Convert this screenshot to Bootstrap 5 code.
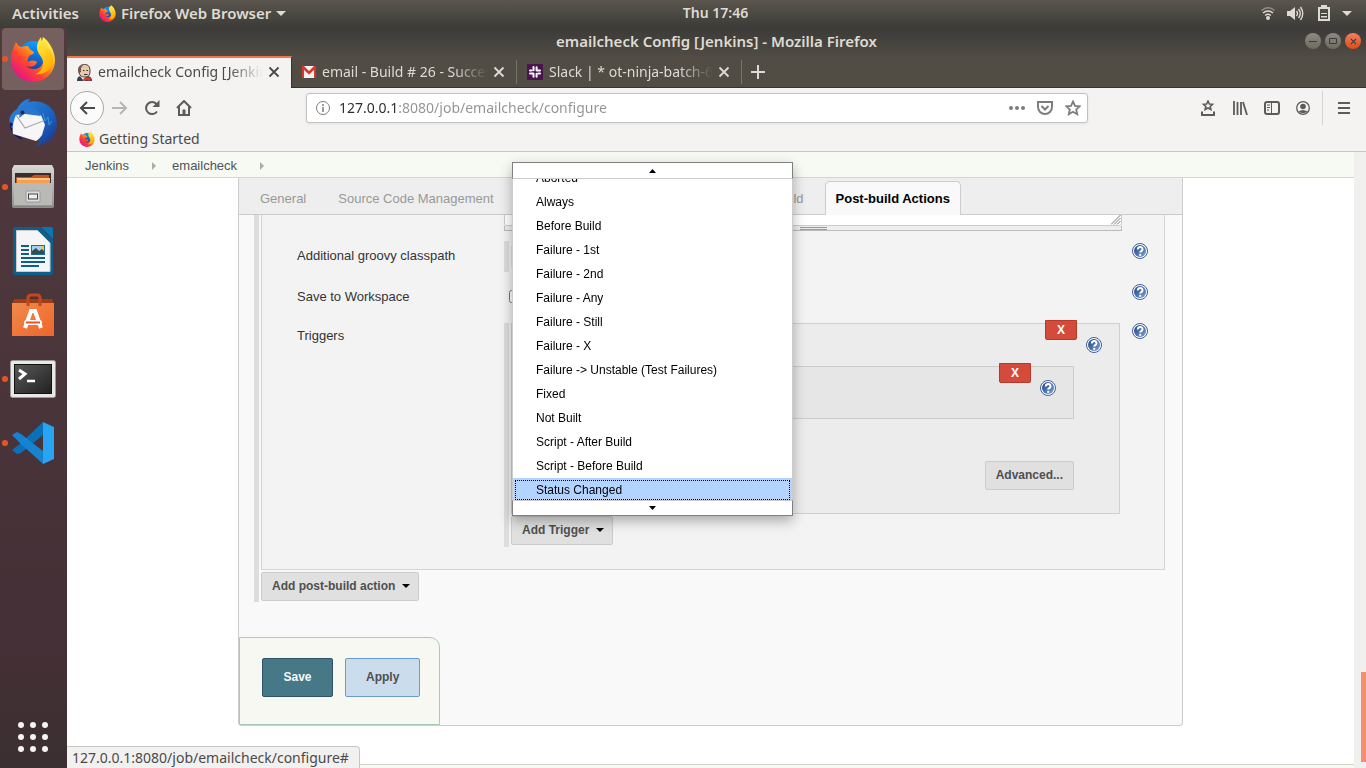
<!DOCTYPE html>
<html lang="en">
<head>
<meta charset="utf-8">
<meta name="viewport" content="width=device-width, initial-scale=1">
<title>emailcheck Config [Jenkins]</title>
<link href="https://cdn.jsdelivr.net/npm/bootstrap@5.3.0/dist/css/bootstrap.min.css" rel="stylesheet">
<style>
  :root { --ui: "Noto Sans", "Open Sans", sans-serif; --web: "Liberation Sans", Arial, sans-serif; }
  body { font-family: var(--ui); font-size: 14px; line-height: 20px; color: #4a4a4a; background: #fff; }
  button { font: inherit; color: inherit; }
  .bare { border: 0; background: none; padding: 0; display: flex; align-items: center; justify-content: center; }
  svg { flex: none; display: block; }

  /* desktop top bar */
  .topbar { height: 28px; background: linear-gradient(#5a564e, #3c3b37); color: #dfdbd2; font-weight: 600; font-size: 15px; padding: 0 14px 2px 12px; }
  .topbar .side { flex: 1 1 0; }
  .topbar .clock { padding-left: 67px; font-size: 14px; }
  .topbar .appmenu { gap: 5px; margin-left: 20px; }

  /* dock */
  .dock { width: 67px; background: linear-gradient(#513a3e, #4a353b 45%, #432f35 85%, #3b2f31); }
  .dock .launcher { width: 62px; height: 62px; margin: 0 0 2px 2px; border-radius: 4px; position: relative; }
  .dock .launcher.current { background: #75605f; }
  .dock .running::before { content: ""; position: absolute; left: 0; top: 28px; width: 6px; height: 6px; border-radius: 50%; background: #e95420; }

  /* browser window */
  .titlebar { height: 28px; background: linear-gradient(#3c3b37, #4f4b44); color: #dfdbd2; font-weight: 600; font-size: 15px; padding-bottom: 2px; }
  .titlebar .wm { right: 5px; top: 5px; gap: 4px; }
  .wm button { width: 16px; height: 16px; border-radius: 50%; background: linear-gradient(#8d8a82, #6d6a63); color: #3c3b37; }
  .wm .wm-close { background: linear-gradient(#f4805b, #df4a1c); }
  .tabstrip { height: 32px; background: #514d45; border-bottom: 1px solid #35332f; color: #dedbd5; }
  .btab { width: 225px; padding: 0 12px 0 10px; position: relative; min-width: 0; }
  .btab + .btab::after { content: ""; position: absolute; right: 0; top: 4px; bottom: 3px; width: 1px; background: #77736b; }
  .btab.on { background: #f4f3f2; color: #4a4a4a; border-top: 2px solid #f07746; border-right: 1px solid #35332f; height: 32px; padding: 0 11px 2px 10px; }
  .btab .ttl { flex: 1; overflow: hidden; white-space: nowrap; margin: 0 5px 0 6px; -webkit-mask-image: linear-gradient(to left, transparent, #000 34px); mask-image: linear-gradient(to left, transparent, #000 34px); }
  .navrow { height: 40px; background: #f4f3f2; color: #5b5b5b; padding: 0 12px 0 3px; }
  .back { width: 34px; height: 34px; border-radius: 50%; border: 1px solid #a8a8a8; background: #fbfbfb; }
  .urlbox { width: 782px; height: 30px; margin-left: 114px; border: 1px solid #c4c2c0; border-radius: 3px; background: #fff; box-shadow: 0 1px 3px rgba(0,0,0,.08); padding: 0 6px 0 9px; color: #7d7d7d; gap: 12px; flex-shrink: 1; }
  .urlbox input { border: 0; outline: 0; padding: 0; min-width: 0; margin-left: -3px; color: transparent; background: linear-gradient(to right, #2b2b2b 60px, #929292 60px); -webkit-background-clip: text; background-clip: text; }
  .bookmarks { height: 24px; background: #f4f3f2; border-bottom: 1px solid #c6c6c4; padding: 0 0 2px 12px; }
  .bookmarks a { color: #4a4a4a; text-decoration: none; gap: 4px; }
  .menusep { width: 1px; height: 34px; background: #d5d4d3; margin: 0 15px 0 12px; }

  /* page */
  .web { font-family: var(--web); font-size: 13px; color: #333; }
  .crumbs { height: 26px; background: #f6faf2; border-bottom: 1px solid #d3d7cf; padding: 2px 0 0 18px; }
  .crumbs a { color: #4d545d; text-decoration: none; }
  .tri-r { width: 0; height: 0; border: 4px solid transparent; border-left-color: #aaa; border-right: 0; margin: 0 16px 0 23px; }
  .config { max-width: 945px; border: 1px solid #ccc; border-top: 0; border-radius: 0 0 4px 4px; background: #f9f9f9; }
  .sections { height: 37px; background: #eee; border-bottom: 1px solid #ccc; padding: 3px 0 0 5px; }
  .sections a { color: #999; text-decoration: none; white-space: nowrap; height: 34px; line-height: 34px; padding: 0 10px; margin: 0 5px; border: 1px solid transparent; border-bottom: 0; }
  .sections a.on { color: #000; font-weight: bold; background: #f9f9f9; border-color: #ccc; border-radius: 5px 5px 0 0; }
  .rail { border-left: 5px solid #ddd; padding-left: 2px; }
  .rail-main { margin: 0 17px 0 15px; padding-bottom: 1px; }
  .group { background: #f3f3f3; border: 1px solid #d5d5d5; border-top: 0; padding: 0 16px 22px 35px; margin-bottom: 2px; }
  .frow { display: grid; grid-template-columns: 207px minmax(0, 1fr) 16px; column-gap: 0; margin-bottom: 10px; }
  .frow > .cell { margin-right: 10px; }
  .frow > .name { padding-top: 5px; }
  .help { width: 16px; height: 16px; }
  .frow > .help { margin-top: 2px; }
  .script { height: 11px; min-height: 0; border: 1px solid #ccc; border-top: 0; border-radius: 0 0 3px 3px; resize: none; background: #fff; display: block; width: 100%; }
  .handle { height: 5px; border: 1px solid #bbb; border-top: 0; background: #eee; }
  .grip { width: 27px; height: 3px; border: 1px solid #999; border-width: 1px 0; margin-top: 1px; }
  .corner { right: 1px; top: 0; }
  .tbox { background: #ececec; border: 1px solid #d0d0d0; padding: 42px 45px 23px 20px; margin-bottom: 2px; position: relative; }
  .tbox .sub { background: #e6e6e6; border: 1px solid #ccc; height: 53px; position: relative; margin-bottom: 42px; }
  .del { position: absolute; top: -4px; right: 42px; width: 32px; height: 20px; border: 1px solid #b8392b; border-radius: 0 0 2px 2px; background: #d54b3b; color: #fff; font: bold 12px/18px var(--web); padding: 0; }
  .tip { position: absolute; top: 13px; right: 17px; }
  .jbtn { height: 29px; background: #e0e0e0; border: 1px solid #ccc; border-radius: 2px; color: #4f4f4f; font: bold 12px/27px var(--web); padding: 0 10px; }
  .jbtn.dropdown-toggle { padding-right: 8px; }
  .jbtn.dropdown-toggle::after { color: #000; margin-left: 7px; border-width: 4px; border-bottom: 0; vertical-align: 2px; }
  .savebar { width: 201px; margin-top: 35px; height: 88px; background: #f6f8f1; border: 1px solid #a8cbb8; border-radius: 0 10px 0 0; padding: 20px 0 0 22px; gap: 12px; }
  .savebar button { height: 39px; border-radius: 2px; font: bold 12px/37px var(--web); padding: 0 20px; }
  .savebar .save { background: #467888; border: 1px solid #2d5565; color: #f4f8f9; min-width: 71px; }
  .savebar .apply { background: #cbdced; border: 1px solid #6a9bd0; color: #4f4f4f; }
  .foot { margin-top: 38px; border-top: 1px solid #d3d3c8; background: #f7f9f3; min-height: 4px; }
  .track { width: 12px; background: #f1f0ef; }
  .thumb { width: 5px; height: 90px; background: #f58e6c; margin: 0 0 6px 7px; }
  .linkbar { left: 0; bottom: 0; height: 22px; border: 1px solid #c8c7c6; border-width: 1px 1px 0 0; border-radius: 0 4px 0 0; background: #f2f1f0; padding: 1px 10px 0 5px; color: #4a4a4a; white-space: nowrap; z-index: 5; }

  /* trigger menu */
  .trigmenu { left: 1px; bottom: 29px; width: 281px; z-index: 20; font: 12px/24px var(--web); color: #000; background: #fff; border: 1px solid #ccc; border-width: 0 1px; box-shadow: 0 5px 12px rgba(0,0,0,.3); }
  .scrollcap { height: 17px; border: 1px solid #808080; margin: 0 -1px; background: #fff; }
  .scrollcap.up { border-bottom-color: #ccc; }
  .scrollcap.down { border-top-color: #ccc; height: 16px; }
  .trigmenu .list { height: 321px; overflow: hidden; display: flex; flex-direction: column; }
  .trigmenu .dropdown-item { flex: none; height: 24px; padding: 0 0 0 23px; color: #000; font-size: 12px; line-height: 24px; }
  .trigmenu .clip { height: 11px; display: flex; align-items: flex-end; overflow: hidden; flex: none; }
  .trigmenu .hot { background: #b3d4ff; outline: 1px dotted #000; outline-offset: -3px; }
</style>
</head>
<body class="d-flex flex-column min-vh-100">

<svg width="0" height="0" class="position-absolute" aria-hidden="true">
  <defs>
    <linearGradient id="fxo" x1=".85" y1=".1" x2=".15" y2=".9"><stop offset="0" stop-color="#fff44f"/><stop offset=".35" stop-color="#ffa21a"/><stop offset=".65" stop-color="#ff4230"/><stop offset="1" stop-color="#e4128f"/></linearGradient>
    <linearGradient id="fxy" x1="0" y1="0" x2=".4" y2="1"><stop offset="0" stop-color="#fff44f"/><stop offset="1" stop-color="#ffb000"/></linearGradient>
    <linearGradient id="fxb" x1=".6" y1="0" x2=".4" y2="1"><stop offset="0" stop-color="#0aa2ff"/><stop offset="1" stop-color="#1a2f9e"/></linearGradient>
    <linearGradient id="tb" x1="0" y1="0" x2="1" y2="1"><stop offset="0" stop-color="#2b8ae0"/><stop offset=".6" stop-color="#1b62bd"/><stop offset="1" stop-color="#1d2f86"/></linearGradient>
    <linearGradient id="silver" x1="0" y1="0" x2="0" y2="1"><stop offset="0" stop-color="#d9d9d7"/><stop offset="1" stop-color="#8e8e8c"/></linearGradient>
    <linearGradient id="bag" x1="0" y1="0" x2="1" y2="1"><stop offset="0" stop-color="#ef8a4c"/><stop offset="1" stop-color="#f0652a"/></linearGradient>
    <linearGradient id="term" x1="0" y1="0" x2="1" y2="1"><stop offset="0" stop-color="#585858"/><stop offset="1" stop-color="#222"/></linearGradient>
    <linearGradient id="hlp" x1="0" y1="0" x2="1" y2="1"><stop offset="0" stop-color="#1b438a"/><stop offset="1" stop-color="#7fa0cf"/></linearGradient>
    <symbol id="firefox" viewBox="0 0 44 46">
      <circle cx="23" cy="22" r="17" fill="url(#fxb)"/>
      <path d="M5 6c1 2 2 4 5 5 3-1 5-1 7-1 1 3 4 5 6 6 0 2-3 3-5 4-1 3-2 4-1 6 2-2 7-2 9 0-1 4-6 6-11 4 5 5 16 4 17-4 1-5-2-9-2-15 0-3 1-6 2-10 6 4 12 14 12 23 0 13-10 22-22 22S0 36 0 24C0 17 2 13 5 6z" fill="url(#fxo)"/>
      <path d="M30 1c-4 5-5 10-3 15 2 4 6 7 5 13-1 5-4 8-8 9 10 2 18-6 18-16C42 13 31 12 30 1z" fill="url(#fxy)"/>
    </symbol>
    <symbol id="help" viewBox="0 0 16 16">
      <circle cx="8" cy="8" r="7.500" fill="#fff" stroke="#3a5f9b"/><circle cx="8" cy="8" r="6" fill="url(#hlp)"/>
      <path d="M5.800 6.400c0-3.200 4.700-3 4.700 0 0 1.700-2.300 1.600-2.300 3.200" fill="none" stroke="#fff" stroke-width="2"/><path d="M7.200 10.800h2v2h-2z" fill="#fff"/>
    </symbol>
    <symbol id="cross" viewBox="0 0 12 12"><path d="M1.500 1.500l9 9M10.500 1.500l-9 9" stroke="currentColor" stroke-width="1.800" fill="none"/></symbol>
  </defs>
</svg>

<header class="topbar d-flex align-items-center">
  <div class="side d-flex align-items-center">
    <button class="bare" type="button">Activities</button>
    <button class="bare appmenu" type="button"><svg width="17" height="17"><use href="#firefox"/></svg>Firefox Web Browser<svg width="10" height="5"><path d="M0 0h10L5 5z" fill="#dfdbd2"/></svg></button>
  </div>
  <div class="clock">Thu 17:46</div>
  <div class="side d-flex align-items-center justify-content-end">
    <svg width="16" height="14" viewBox="0 0 16 14"><g fill="none" stroke="#dfdbd2" stroke-width="1.600"><path d="M1.500 4.500Q8 -1 14.500 4.500" opacity=".45"/><path d="M3 7Q8 3 13 7"/><path d="M5.200 9.500Q8 7 10.800 9.500"/></g><circle cx="8" cy="12" r="2" fill="#dfdbd2"/></svg>
    <svg width="17" height="15" viewBox="0 0 17 15" style="margin-left:11px"><path d="M0 5h3l5-4v13l-5-4H0z" fill="#dfdbd2"/><path d="M9.500 5q2 2.500 0 5M11.500 3q3.500 4.500 0 9M13.500 1q4.500 6.500 0 13" fill="none" stroke="#dfdbd2" stroke-width="1.400"/></svg>
    <svg width="12" height="16" viewBox="0 0 12 16" style="margin-left:14px"><path d="M3 0h6v2h3v14H0V2h3zM2 4v10h8V4zM3 8h6v1H3zM3 11h6v1.500H3z" fill="#dfdbd2" fill-rule="evenodd"/></svg>
    <svg width="10" height="5" style="margin-left:12px"><path d="M0 0h10L5 5z" fill="#dfdbd2"/></svg>
  </div>
</header>

<div class="d-flex flex-grow-1">
  <nav class="dock d-flex flex-column flex-shrink-0" aria-label="Dock">
    <button class="bare launcher current running" type="button" aria-label="Firefox"><svg width="44" height="46"><use href="#firefox"/></svg></button>
    <button class="bare launcher" type="button" aria-label="Thunderbird">
      <svg width="48" height="48" viewBox="0 0 48 48"><path d="M8 10C12 3 16 0 21 0l-2 3C34 0 44 8 47 18c1 5 1 9 0 13l-3 8-1-2-3 7-1-3-5 6v-3l-7 4c3-4 4-8 4-11L5 34C-2 26-1 15 8 10z" fill="url(#tb)"/><path d="M1 23l3 2-2 3 10 8 1 5-7-4C2 33 0 28 1 23z" fill="#25145e"/><path d="M7 16l16-2 9 2 4 10-3 10c-2 3-4 5-6 6L4 35c-1-4 0-13 3-19z" fill="#f6f6f8"/><path d="M7 16l9 13 18-7" fill="none" stroke="#aaa" stroke-width="1.200"/><path d="M10 10c7-6 18-3 22 7l-16-2c-2 0-2 2-6 4 1-3 0-5-1-6z" fill="#2777d0"/><path d="M34 14l2 8 3-4 1 8 3-4" fill="none" stroke="#3f93dc"/><circle cx="13.500" cy="13.500" r="2" fill="#2a2a3a"/></svg>
    </button>
    <button class="bare launcher running" type="button" aria-label="Files">
      <svg width="42" height="44" viewBox="0 0 42 44"><path d="M2 0h38l2 4v37q0 2-2 2H2q-2 0-2-2V4z" fill="url(#silver)"/><path d="M3 8h36v10H3z" fill="#3a2d29"/><path d="M4 12h15l3-2h15v8H4z" fill="#c2561d"/><path d="M5 13h33v5H5z" fill="#f5a04e"/><path d="M5 14h33" stroke="#fbe9d0"/><path d="M2 18h38v23H2z" fill="#b9b9b6"/><path d="M2 41h38" stroke="#777"/><rect x="14" y="26" width="14" height="11" rx="1" fill="#ddd" stroke="#999"/><rect x="16.500" y="29" width="9" height="5" fill="#eee" stroke="#444"/></svg>
    </button>
    <button class="bare launcher" type="button" aria-label="LibreOffice Writer">
      <svg width="40" height="48" viewBox="0 0 40 48"><path d="M2 0h25l13 13v33q0 2-2 2H2q-2 0-2-2V2q0-2 2-2z" fill="#0f5f8d"/><path d="M28 0h10q2 0 2 2v10z" fill="#0878b5"/><path d="M3.500 3.500h21L37 16v28.500H3.500z" fill="#f5f5f5" stroke="#ccc"/><path d="M8 19h8M8 23h8M8 27h8M8 31h24M8 35h24M8 39h18" stroke="#0f5f8d" stroke-width="2"/><path d="M18 18h14v10H18z" fill="#1d6c98"/><path d="M19 19h12v8H19z" fill="#a7d2ee"/><circle cx="29.500" cy="20.500" r="1.500" fill="#f5c72c"/><path d="M19 27v-3l4-3 3 3 3-2 2 2v3z" fill="#3b4a50"/></svg>
    </button>
    <button class="bare launcher" type="button" aria-label="Ubuntu Software">
      <svg width="42" height="44" viewBox="0 0 42 44"><path d="M2 6h38l2 5H0z" fill="#9e3c14"/><path d="M0 10h42v33H0z" fill="url(#bag)"/><path d="M16 13V5q0-3 3-3h6q3 0 3 3v8" fill="none" stroke="#c8461a" stroke-width="3"/><path d="M13 35l6-17h4l6 17" fill="none" stroke="#fff" stroke-width="4"/><rect x="12" y="27" width="18" height="5" rx="2.500" fill="#fff"/><path d="M14 29.500h14" stroke="#e95420" stroke-width="2"/></svg>
    </button>
    <button class="bare launcher running" type="button" aria-label="Terminal">
      <svg width="46" height="38" viewBox="0 0 46 38"><rect x=".5" y=".5" width="45" height="37" rx="2" fill="#e8e8e6" stroke="#999"/><path d="M4 4h38v30H4z" fill="#111"/><path d="M5 5h36v28H5z" fill="url(#term)"/><path d="M9 10l6 4-6 5" fill="none" stroke="#fff" stroke-width="3"/><path d="M17 21h8" stroke="#fff" stroke-width="2.500"/></svg>
    </button>
    <button class="bare launcher running" type="button" aria-label="Visual Studio Code">
      <svg width="42" height="42" viewBox="0 0 42 42"><path d="M31 0L9 21 0 28l5 4 4-1 22-18z" fill="#0a70b8"/><path d="M0 13l5-3 4 2 22 17v13L9 22z" fill="#1583cf"/><path d="M31 0l11 5v32l-11 5z" fill="#28a5f2"/></svg>
    </button>
    <button class="bare launcher mt-auto mb-0" type="button" aria-label="Show Applications">
      <svg width="30" height="30" viewBox="0 0 30 30" fill="#f5f3f3"><circle cx="3" cy="3" r="3"/><circle cx="15" cy="3" r="3"/><circle cx="27" cy="3" r="3"/><circle cx="3" cy="15" r="3"/><circle cx="15" cy="15" r="3"/><circle cx="27" cy="15" r="3"/><circle cx="3" cy="27" r="3"/><circle cx="15" cy="27" r="3"/><circle cx="27" cy="27" r="3"/></svg>
    </button>
  </nav>

  <div class="d-flex flex-column flex-grow-1 position-relative" style="min-width:0">
    <div class="titlebar d-flex align-items-center justify-content-center position-relative">
      <span>emailcheck Config [Jenkins] - Mozilla Firefox</span>
      <div class="wm d-flex position-absolute">
        <button class="bare" type="button" aria-label="Minimize"><svg width="8" height="8"><path d="M0 4.500h8" stroke="currentColor"/></svg></button>
        <button class="bare" type="button" aria-label="Maximize"><svg width="8" height="6"><path d="M.5.5h7v5h-7z" fill="none" stroke="currentColor"/></svg></button>
        <button class="bare wm-close" type="button" aria-label="Close"><svg width="7" height="7"><use href="#cross"/></svg></button>
      </div>
    </div>

    <div class="tabstrip d-flex">
      <div class="btab on d-flex align-items-center">
        <svg width="15" height="17" viewBox="0 0 15 17"><path d="M0 17c0-4 2-5 4-5l7 0c3 1 4 2 4 5z" fill="#2f4450"/><path d="M3 12l4 5 3-5z" fill="#fff"/><path d="M6 15l3-2 5 1-1 3-4-1-2 1z" fill="#d33833"/><path d="M2 7C2 2 4 .5 7.500.5S13 2 13 7s-2 6-5 6-6-1-6-6z" fill="#e6c8aa" stroke="#4a3d36"/><path d="M1.500 9C0 4 2 1 6 1L4 4v4z" fill="#6f5b4c"/><path d="M6 6.500h1.500M9.500 6.500H11M7 10.500h3.500" stroke="#333"/></svg>
        <span class="ttl">emailcheck Config [Jenkins]</span>
        <button class="bare" type="button" aria-label="Close tab"><svg width="12" height="12"><use href="#cross"/></svg></button>
      </div>
      <div class="btab d-flex align-items-center">
        <svg width="14" height="12" viewBox="0 0 14 12"><path d="M0 0h14v12H0z" fill="#f2f2f2"/><path d="M0 0h2l5 5 5-5h2v12h-2V4L7 8.500 2 4v8H0z" fill="#d5392c"/></svg>
        <span class="ttl">email - Build # 26 - Successful</span>
        <button class="bare" type="button" aria-label="Close tab"><svg width="12" height="12"><use href="#cross"/></svg></button>
      </div>
      <div class="btab d-flex align-items-center">
        <svg width="16" height="16" viewBox="0 0 16 16"><path d="M0 0h16v16H0z" fill="#4a154b"/><g stroke="#fff" stroke-width="2" stroke-linecap="round"><path d="M6.500 3v3.200M9.600 3.200v3.200M6.500 9.700v3M9.600 9.700v3M3 6.500h1.500M3 9.600h3.200M11.500 9.600H13M9.600 6.500H13"/></g></svg>
        <span class="ttl">Slack | * ot-ninja-batch-6 | OpsTree</span>
        <button class="bare" type="button" aria-label="Close tab"><svg width="12" height="12"><use href="#cross"/></svg></button>
      </div>
      <button class="bare ms-2" type="button" aria-label="New tab"><svg width="16" height="14"><path d="M8 0v14M1 7h14" stroke="currentColor" stroke-width="2"/></svg></button>
    </div>

    <div class="navrow d-flex align-items-center">
      <button class="bare back" type="button" aria-label="Back"><svg width="16" height="14"><path d="M16 7H2M8 1L2 7l6 6" fill="none" stroke="#4a4a4a" stroke-width="2"/></svg></button>
      <button class="bare" type="button" aria-label="Forward" style="margin-left:8px"><svg width="16" height="14"><path d="M0 7h14M8 1l6 6-6 6" fill="none" stroke="#b5b5b5" stroke-width="2"/></svg></button>
      <button class="bare ms-3" type="button" aria-label="Reload"><svg width="16" height="16" viewBox="0 0 16 16"><path d="M13 11.500A6 6 0 1 1 12.500 4" fill="none" stroke="currentColor" stroke-width="2"/><path d="M15.500 0v7h-7z" fill="currentColor"/></svg></button>
      <button class="bare ms-3" type="button" aria-label="Home"><svg width="16" height="16" viewBox="0 0 16 16"><path d="M1 8l7-7 7 7M3 7v8h10V7" fill="none" stroke="currentColor" stroke-width="2"/><path d="M6.500 9.500h3V15h-3z" fill="currentColor"/></svg></button>
      <div class="urlbox d-flex align-items-center">
        <svg width="14" height="14"><circle cx="7" cy="7" r="6.500" fill="none" stroke="currentColor"/><path d="M7 6v5M7 3v2" stroke="currentColor" stroke-width="1.500"/></svg>
        <input class="flex-grow-1" type="text" aria-label="Address" value="127.0.0.1:8080/job/emailcheck/configure">
        <svg width="16" height="4" fill="currentColor"><circle cx="2" cy="2" r="2"/><circle cx="8" cy="2" r="2"/><circle cx="14" cy="2" r="2"/></svg>
        <svg width="16" height="15"><path d="M1 1h14v5a7 7 0 0 1-14 0zM4.500 5L8 8.500 11.500 5" fill="none" stroke="currentColor" stroke-width="2"/></svg>
        <svg width="16" height="16" viewBox="0 0 16 16"><path d="M8 1.500l2 4.300 4.700.5-3.500 3.200 1 4.700L8 11.800l-4.200 2.400 1-4.700L1.300 6.300 6 5.800z" fill="none" stroke="currentColor" stroke-width="1.800"/></svg>
      </div>
      <div class="d-flex align-items-center ms-auto">
        <svg width="16" height="16" viewBox="0 0 16 16"><path d="M8 1l1.400 3 3.100.3L10.200 6.500l.7 3L8 8l-2.900 1.500.7-3L3.500 4.300 6.600 4z" fill="none" stroke="currentColor" stroke-width="1.600"/><path d="M2 11.500V15h12v-3.500" fill="none" stroke="currentColor" stroke-width="2"/></svg>
        <svg width="16" height="14" class="ms-3"><path d="M2 0v14M5.500 1v13M9 1v13M11 1l4 13" stroke="currentColor" stroke-width="1.800"/></svg>
        <svg width="16" height="14" class="ms-3"><rect x="1" y="1" width="14" height="12" rx="2" fill="none" stroke="currentColor" stroke-width="2"/><path d="M7.500 1v12M3 4h3M3 6.500h3M3 9h2" stroke="currentColor"/></svg>
        <svg width="14" height="14" class="ms-3" viewBox="0 0 14 14"><circle cx="7" cy="7" r="6.300" fill="none" stroke="currentColor" stroke-width="1.300"/><circle cx="7" cy="5.500" r="2.800" fill="currentColor"/><path d="M2.500 10.500Q7 7.500 11.500 10.500 7 14 2.500 10.500z" fill="currentColor"/></svg>
        <span class="menusep"></span>
        <svg width="12" height="12" class="me-1"><path d="M0 1h12M0 6h12M0 11h12" stroke="currentColor" stroke-width="2"/></svg>
      </div>
    </div>

    <div class="bookmarks d-flex align-items-center"><a href="#" class="d-flex align-items-center"><svg width="16" height="16"><use href="#firefox"/></svg>Getting Started</a></div>

    <div class="d-flex flex-grow-1">
      <main class="web d-flex flex-column flex-grow-1" style="min-width:0">
        <nav class="crumbs d-flex align-items-center" aria-label="breadcrumb"><a href="#">Jenkins</a><span class="tri-r"></span><a href="#">emailcheck</a><span class="tri-r"></span></nav>

        <form class="config w-100 mx-auto">
          <nav class="sections d-flex">
            <a href="#">General</a><a href="#">Source Code Management</a><a href="#">Build Triggers</a><a href="#">Build Environment</a><a href="#">Build</a><a href="#" class="on">Post-build Actions</a>
          </nav>

          <div class="rail rail-main">
            <div class="group">
              <div class="frow">
                <span></span>
                <div class="cell position-relative">
                  <textarea class="script" aria-label="Pre-send Script"></textarea>
                  <svg class="corner position-absolute" width="10" height="10"><path d="M0 9.500L9.500 0M3 9.500L9.500 3M6 9.500L9.500 6" stroke="#777"/></svg>
                  <div class="handle d-flex justify-content-center"><span class="grip"></span></div>
                </div>
              </div>
              <div class="frow" style="min-height:31px">
                <label class="name" for="cp">Additional groovy classpath</label>
                <div class="cell rail d-flex align-items-center"><input id="cp" type="text" class="border rounded-1" style="height:27px;width:120px"></div>
                <button class="bare help" type="button" aria-label="Help"><svg width="16" height="16"><use href="#help"/></svg></button>
              </div>
              <div class="frow" style="min-height:29px">
                <label class="name" for="ws">Save to Workspace</label>
                <div class="cell"><input id="ws" type="checkbox" style="margin:8px 0 0 5px"></div>
                <button class="bare help" type="button" aria-label="Help"><svg width="16" height="16"><use href="#help"/></svg></button>
              </div>
              <div class="frow mb-0">
                <span class="name">Triggers</span>
                <div class="cell rail" style="margin-top:2px;padding:0 2px 2px 2px">
                  <div class="tbox">
                    <button class="del" type="button">X</button>
                    <button class="bare help tip" type="button" aria-label="Help"><svg width="16" height="16"><use href="#help"/></svg></button>
                    <div class="sub">
                      <button class="del" type="button">X</button>
                      <button class="bare help tip" type="button" aria-label="Help"><svg width="16" height="16"><use href="#help"/></svg></button>
                    </div>
                    <div class="d-flex justify-content-end"><button class="jbtn" type="button">Advanced...</button></div>
                  </div>
                  <div class="position-relative d-flex">
                    <button class="jbtn dropdown-toggle" type="button" aria-expanded="true">Add Trigger</button>
                    <div class="trigmenu position-absolute">
                      <div class="scrollcap up d-flex align-items-center justify-content-center"><svg width="7" height="4"><path d="M0 4h7L3.500 0z"/></svg></div>
                      <div class="list">
                        <div class="clip"><button class="dropdown-item" type="button">Aborted</button></div>
                        <button class="dropdown-item" type="button">Always</button>
                        <button class="dropdown-item" type="button">Before Build</button>
                        <button class="dropdown-item" type="button">Failure - 1st</button>
                        <button class="dropdown-item" type="button">Failure - 2nd</button>
                        <button class="dropdown-item" type="button">Failure - Any</button>
                        <button class="dropdown-item" type="button">Failure - Still</button>
                        <button class="dropdown-item" type="button">Failure - X</button>
                        <button class="dropdown-item" type="button">Failure -&gt; Unstable (Test Failures)</button>
                        <button class="dropdown-item" type="button">Fixed</button>
                        <button class="dropdown-item" type="button">Not Built</button>
                        <button class="dropdown-item" type="button">Script - After Build</button>
                        <button class="dropdown-item" type="button">Script - Before Build</button>
                        <button class="dropdown-item hot" type="button">Status Changed</button>
                      </div>
                      <div class="scrollcap down d-flex align-items-center justify-content-center"><svg width="7" height="4"><path d="M0 0h7L3.500 4z"/></svg></div>
                    </div>
                  </div>
                </div>
                <button class="bare help" type="button" aria-label="Help"><svg width="16" height="16"><use href="#help"/></svg></button>
              </div>
            </div>
            <button class="jbtn dropdown-toggle d-block" type="button">Add post-build action</button>
          </div>

          <div class="savebar d-flex align-items-start"><button class="save" type="submit">Save</button><button class="apply" type="button">Apply</button></div>
        </form>

        <footer class="foot flex-grow-1"></footer>
      </main>
      <div class="track d-flex flex-column justify-content-end"><div class="thumb"></div></div>
    </div>
    <div class="linkbar position-absolute">127.0.0.1:8080/job/emailcheck/configure#</div>
  </div>
</div>

<script src="https://cdn.jsdelivr.net/npm/bootstrap@5.3.0/dist/js/bootstrap.bundle.min.js"></script>
</body>
</html>
